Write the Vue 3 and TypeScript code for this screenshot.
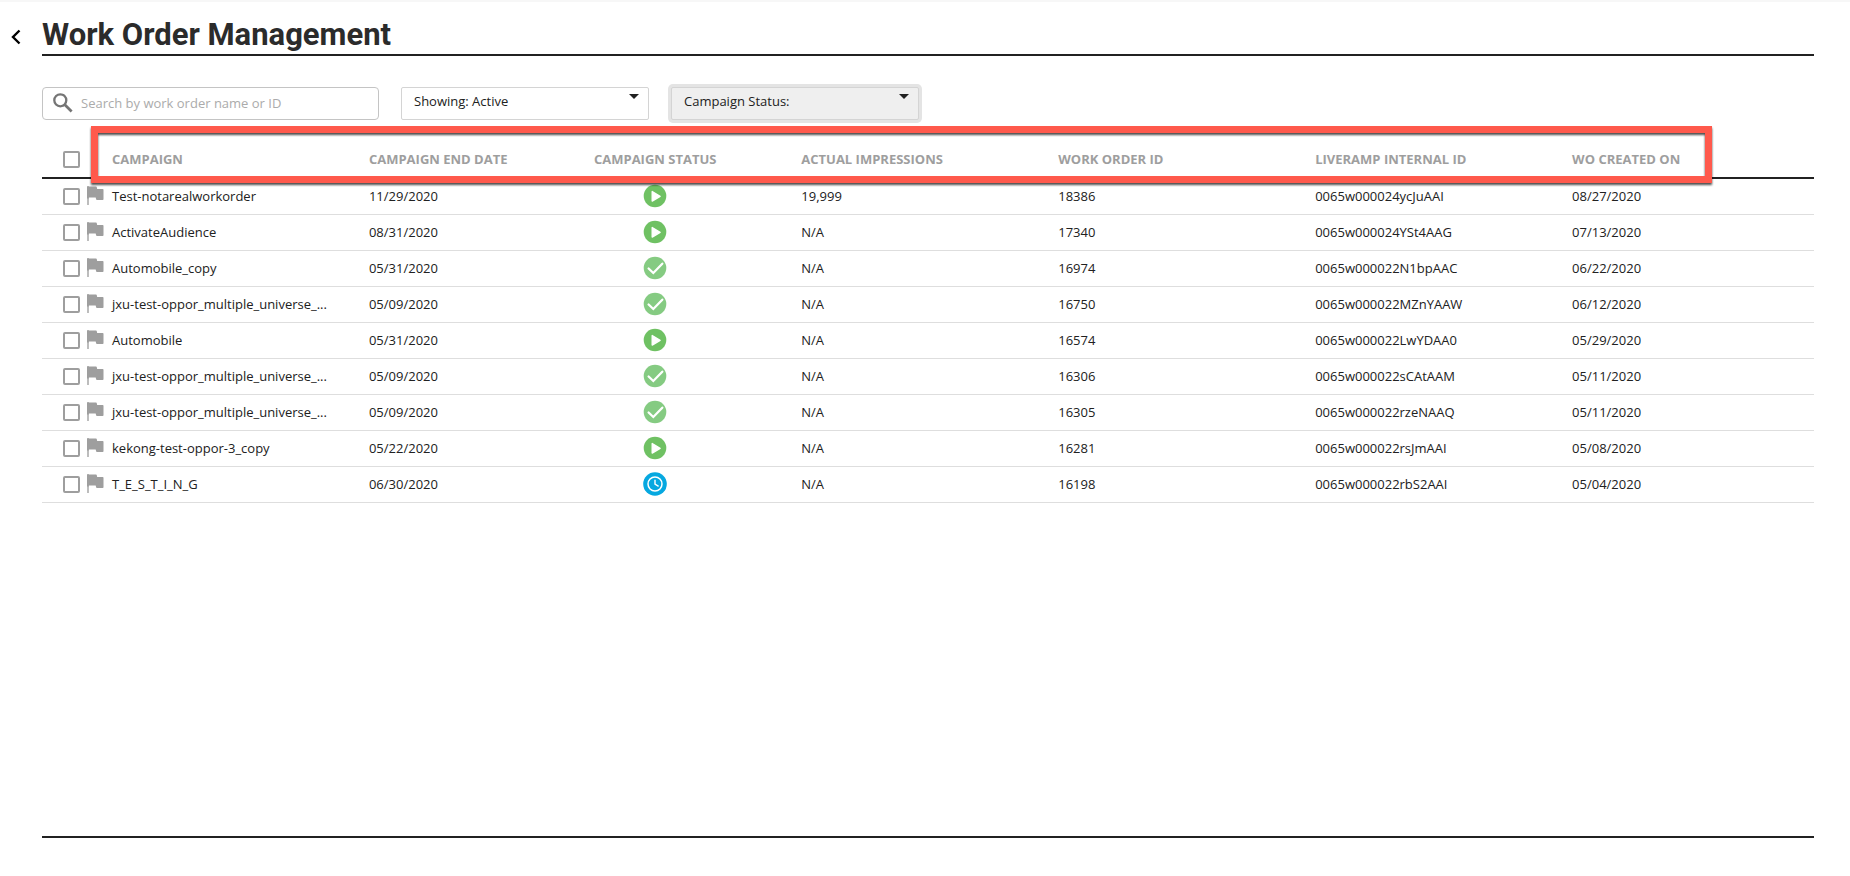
<script setup lang="ts">
import { ref } from 'vue'

type Status = 'running' | 'done' | 'scheduled'

interface WorkOrder {
  campaign: string
  endDate: string
  status: Status
  impressions: string
  id: string
  internalId: string
  created: string
}

const search = ref('')
const showing = ref('active')
const campaignStatus = ref('any')

const statusLabels: Record<Status, string> = {
  running: 'Running',
  done: 'Completed',
  scheduled: 'Scheduled',
}

const orders: WorkOrder[] = [
  { campaign: 'Test-notarealworkorder', endDate: '11/29/2020', status: 'running', impressions: '19,999', id: '18386', internalId: '0065w000024ycJuAAI', created: '08/27/2020' },
  { campaign: 'ActivateAudience', endDate: '08/31/2020', status: 'running', impressions: 'N/A', id: '17340', internalId: '0065w000024YSt4AAG', created: '07/13/2020' },
  { campaign: 'Automobile_copy', endDate: '05/31/2020', status: 'done', impressions: 'N/A', id: '16974', internalId: '0065w000022N1bpAAC', created: '06/22/2020' },
  { campaign: 'jxu-test-oppor_multiple_universe_...', endDate: '05/09/2020', status: 'done', impressions: 'N/A', id: '16750', internalId: '0065w000022MZnYAAW', created: '06/12/2020' },
  { campaign: 'Automobile', endDate: '05/31/2020', status: 'running', impressions: 'N/A', id: '16574', internalId: '0065w000022LwYDAA0', created: '05/29/2020' },
  { campaign: 'jxu-test-oppor_multiple_universe_...', endDate: '05/09/2020', status: 'done', impressions: 'N/A', id: '16306', internalId: '0065w000022sCAtAAM', created: '05/11/2020' },
  { campaign: 'jxu-test-oppor_multiple_universe_...', endDate: '05/09/2020', status: 'done', impressions: 'N/A', id: '16305', internalId: '0065w000022rzeNAAQ', created: '05/11/2020' },
  { campaign: 'kekong-test-oppor-3_copy', endDate: '05/22/2020', status: 'running', impressions: 'N/A', id: '16281', internalId: '0065w000022rsJmAAI', created: '05/08/2020' },
  { campaign: 'T_E_S_T_I_N_G', endDate: '06/30/2020', status: 'scheduled', impressions: 'N/A', id: '16198', internalId: '0065w000022rbS2AAI', created: '05/04/2020' },
]
</script>

<template>
  <div class="page">
    <header class="page-head">
      <button class="back" type="button" aria-label="Back">
        <svg width="10" height="16" viewBox="0 0 10 16" aria-hidden="true">
          <path d="M8.5 1.5 2 8l6.5 6.5" fill="none" stroke="#000" stroke-width="2.4" />
        </svg>
      </button>
      <h1 class="title">Work Order Management</h1>
    </header>

    <main class="content">
      <form class="filters" @submit.prevent>
        <div class="search">
          <svg class="search-icon" width="20" height="20" viewBox="0 0 20 20" aria-hidden="true">
            <circle cx="7.3" cy="7.3" r="6" fill="none" stroke="#757575" stroke-width="2.3" />
            <path d="m11.6 11.6 7 7" stroke="#757575" stroke-width="2.8" />
          </svg>
          <input v-model="search" class="search-input" type="text" aria-label="Search work orders" placeholder="Search by work order name or ID" />
        </div>
        <div class="picker">
          <select v-model="showing" class="select" aria-label="Showing">
            <option value="active">Showing: Active</option>
          </select>
          <svg class="caret" width="10" height="5" viewBox="0 0 10 5" aria-hidden="true"><path d="M0 0h10L5 5z" fill="#212121" /></svg>
        </div>
        <div class="picker">
          <select v-model="campaignStatus" class="select select-active" aria-label="Campaign status">
            <option value="any">Campaign Status:</option>
          </select>
          <svg class="caret" width="10" height="5" viewBox="0 0 10 5" aria-hidden="true"><path d="M0 0h10L5 5z" fill="#212121" /></svg>
        </div>
      </form>

      <div class="table-area">
        <table class="orders">
          <colgroup>
            <col class="col-pick" />
            <col class="col-wide" />
            <col class="col-end" />
            <col class="col-status" />
            <col class="col-wide" />
            <col class="col-wide" />
            <col class="col-wide" />
            <col />
          </colgroup>
          <thead>
            <tr>
              <th class="pick"><div class="pick-inner"><input class="tick" type="checkbox" aria-label="Select all work orders" /></div></th>
              <th scope="col">CAMPAIGN</th>
              <th scope="col">CAMPAIGN END DATE</th>
              <th scope="col" class="status">CAMPAIGN STATUS</th>
              <th scope="col">ACTUAL IMPRESSIONS</th>
              <th scope="col">WORK ORDER ID</th>
              <th scope="col">LIVERAMP INTERNAL ID</th>
              <th scope="col">WO CREATED ON</th>
            </tr>
          </thead>
          <tbody>
            <tr v-for="order in orders" :key="order.id">
              <td class="pick">
                <div class="pick-inner">
                  <input class="tick" type="checkbox" :aria-label="'Select ' + order.campaign" />
                  <svg class="flag" width="17" height="19" viewBox="0 0 17 19" aria-hidden="true">
                    <path d="M0 0h2v19H0z" fill="#bdbdbd" />
                    <path d="M0 1.2Q0 .5.8.5H9q.7 0 .8.7l.4 1.8h5.5q.8 0 .8.8v9.4q0 .8-.8.8H10q-.8 0-.9-.8l-.4-1.7H1.8v1H0z" fill="#9e9e9e" />
                  </svg>
                </div>
              </td>
              <td>{{ order.campaign }}</td>
              <td>{{ order.endDate }}</td>
              <td class="status">
                <svg class="status-icon" width="24" height="24" viewBox="0 0 24 24" role="img" :aria-label="statusLabels[order.status]">
                  <template v-if="order.status === 'running'">
                    <circle cx="12" cy="12" r="11.3" fill="#6fc163" />
                    <path d="M9.2 7.5v9.6l7.9-4.8z" fill="#fff" stroke="#fff" stroke-width="1.4" stroke-linejoin="round" />
                  </template>
                  <template v-else-if="order.status === 'done'">
                    <circle cx="12" cy="12" r="11.3" fill="#85cb82" />
                    <path d="m5.6 12.5 4.7 4.5 9-9.3" fill="none" stroke="#fff" stroke-width="2.3" stroke-linecap="round" />
                  </template>
                  <template v-else>
                    <circle cx="12" cy="12" r="11.8" fill="#06a8e0" />
                    <circle cx="12" cy="12" r="7" fill="none" stroke="#fff" stroke-width="1.5" />
                    <path d="M12 7.8v4.4l3.6 2.2" fill="none" stroke="#fff" stroke-width="1.4" />
                  </template>
                </svg>
              </td>
              <td>{{ order.impressions }}</td>
              <td>{{ order.id }}</td>
              <td>{{ order.internalId }}</td>
              <td>{{ order.created }}</td>
            </tr>
          </tbody>
        </table>
        <div class="highlight" aria-hidden="true"></div>
      </div>
    </main>
  </div>
</template>

<style>
body {
  margin: 0;
  background: #fff;
}
</style>

<style scoped>
.page {
  box-sizing: border-box;
  min-height: 100vh;
  display: flex;
  flex-direction: column;
  padding: 0 36px 38px 0;
  border-top: 2px solid #f7f7f7;
  font-family: "Open Sans", "Noto Sans", sans-serif;
  font-size: 13px;
  color: #212121;
}

.page-head {
  display: flex;
  height: 54px;
}

.back {
  width: 42px;
  padding: 15px 0 0 11px;
  border: 0;
  background: none;
  text-align: left;
}

.back svg {
  display: block;
}

.title {
  flex: 1;
  box-sizing: border-box;
  margin: 0;
  padding-top: 15px;
  border-bottom: 2px solid #212121;
  font-family: Roboto, sans-serif;
  font-size: 31px;
  font-weight: 700;
  line-height: 36px;
  color: #2b2b2b;
}

.content {
  flex: 1;
  display: flex;
  flex-direction: column;
  margin-left: 42px;
  padding-top: 31px;
  border-bottom: 2px solid #212121;
}

.filters {
  display: flex;
  gap: 22px;
}

.search {
  box-sizing: border-box;
  width: 337px;
  height: 33px;
  display: flex;
  align-items: center;
  gap: 8px;
  padding: 0 10px 2px;
  border: 1px solid #c4c4c4;
  border-radius: 4px;
}

.search-icon {
  flex: none;
}

.search-input {
  flex: 1;
  min-width: 0;
  padding: 0;
  border: 0;
  outline: 0;
  background: none;
  font: inherit;
  color: inherit;
}

.search-input::placeholder {
  color: #ababab;
  opacity: 1;
}

.picker {
  position: relative;
  width: 248px;
}

.select {
  appearance: none;
  box-sizing: border-box;
  width: 100%;
  height: 33px;
  padding: 0 32px 5px 12px;
  border: 1px solid #d4d4d4;
  border-radius: 2px;
  background: #fff;
  font: inherit;
  color: inherit;
}

.select-active {
  background: #efefef;
  box-shadow: 0 0 0 3px #e4e4e4;
}

.caret {
  position: absolute;
  top: 7px;
  right: 10px;
  pointer-events: none;
}

.table-area {
  position: relative;
  margin-top: 22px;
}

.orders {
  width: 100%;
  table-layout: fixed;
  border-collapse: separate;
  border-spacing: 0;
}

.col-pick {
  width: 70px;
}

.col-wide {
  width: 14.5%;
}

.col-end {
  width: 10%;
}

.col-status {
  width: 14.4%;
}

th,
td {
  box-sizing: border-box;
  height: 36px;
  padding: 0 0 2px;
  text-align: left;
  white-space: nowrap;
  line-height: 18px;
}

th {
  height: 37px;
  border-bottom: 2px solid #212121;
  font-weight: 700;
  color: #9e9e9e;
}

td {
  border-bottom: 1px solid #dedede;
}

.status {
  padding-right: 37px;
  text-align: center;
}

.pick {
  padding-bottom: 0;
}

.pick-inner {
  display: flex;
  align-items: center;
  gap: 7px;
  padding-left: 21px;
}

.tick {
  appearance: none;
  box-sizing: border-box;
  flex: none;
  width: 17px;
  height: 17px;
  margin: 0;
  border: 2px solid #9e9e9e;
  border-radius: 2px;
  background: #fff;
}

.tick:checked {
  background: #9e9e9e;
}

.flag {
  flex: none;
  margin-bottom: 3px;
}

.status-icon {
  display: block;
  margin: 0 auto;
}

.highlight {
  position: absolute;
  top: -16px;
  left: 49px;
  right: 102px;
  box-sizing: border-box;
  height: 57px;
  border: 7px solid #ff594c;
  filter: drop-shadow(0 2px 1px rgba(0, 0, 0, 0.7));
  pointer-events: none;
}
</style>
